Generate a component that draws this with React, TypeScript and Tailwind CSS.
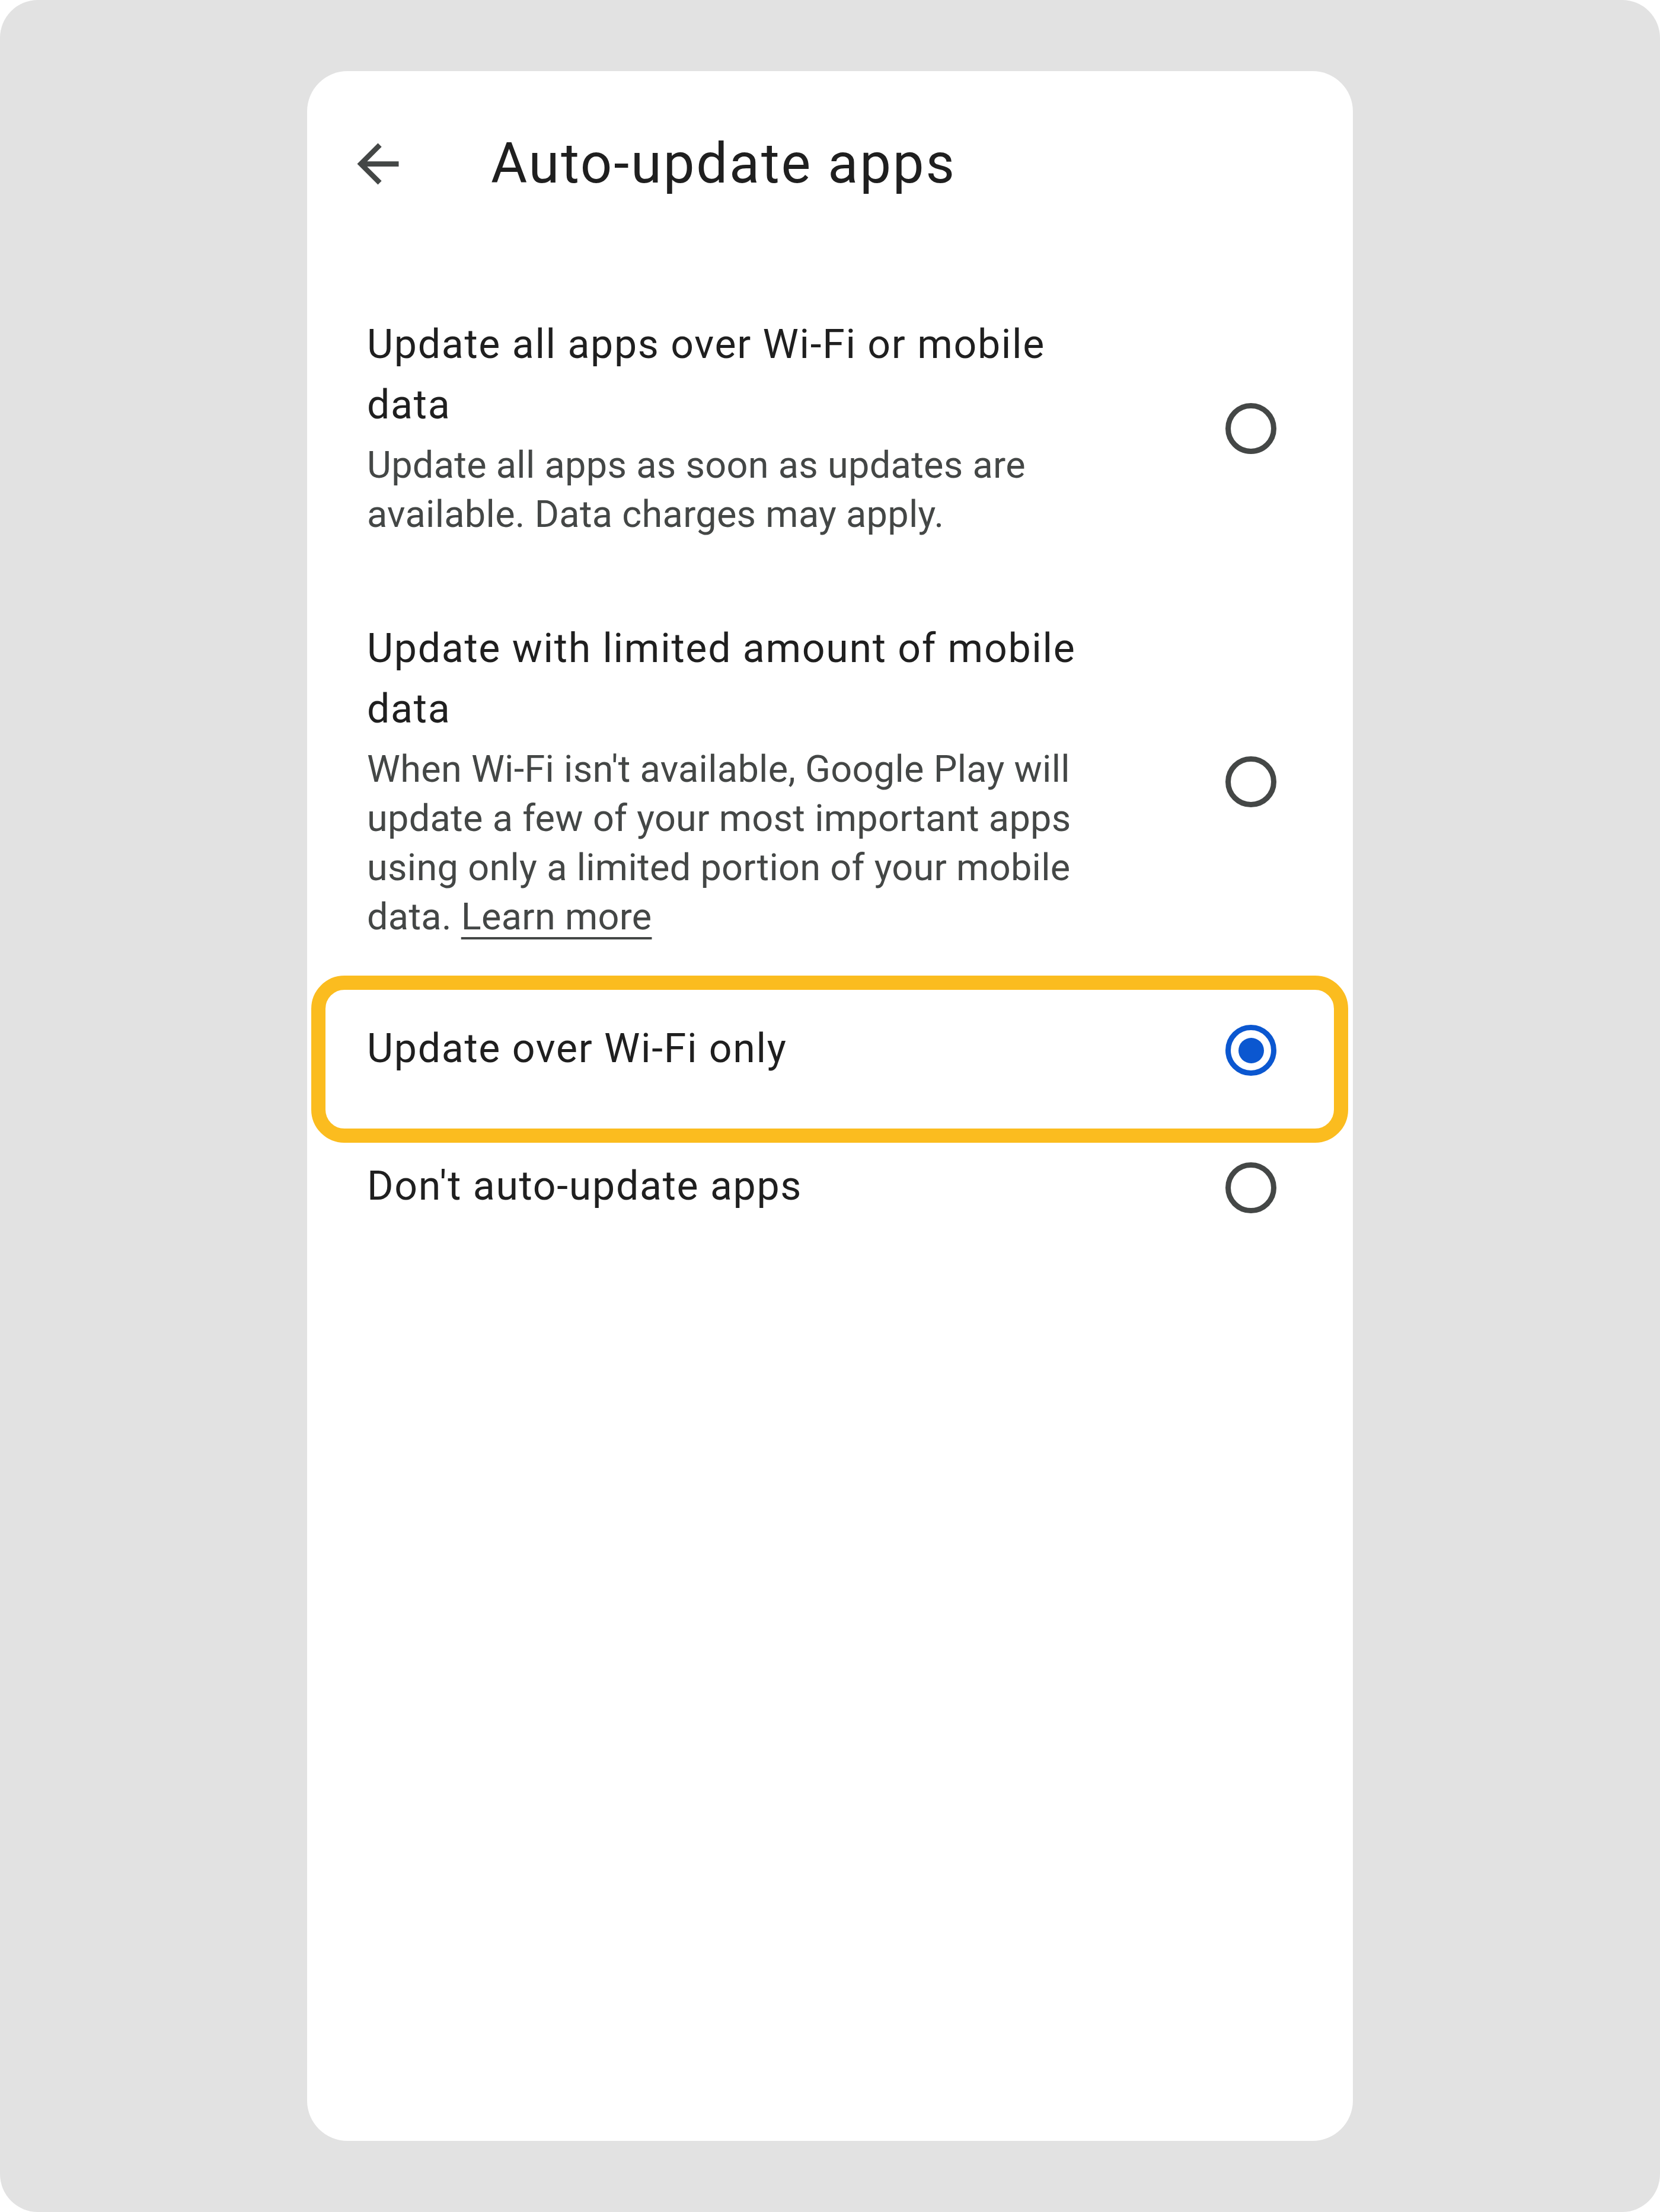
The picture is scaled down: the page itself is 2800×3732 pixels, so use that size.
import React from "react";

type Option = {
  title: string;
  desc?: React.ReactNode;
  selected?: boolean;
  highlight?: boolean;
};

const options: Option[] = [
  {
    title: "Update all apps over Wi-Fi or mobile data",
    desc: "Update all apps as soon as updates are available. Data charges may apply.",
  },
  {
    title: "Update with limited amount of mobile data",
    desc: (
      <>
        When Wi-Fi isn't available, Google Play will update a few of your most important apps using only a
        limited portion of your mobile data.{" "}
        <span className="underline decoration-[4px] underline-offset-[13px]">Learn more</span>
      </>
    ),
  },
  { title: "Update over Wi-Fi only", selected: true, highlight: true },
  { title: "Don't auto-update apps" },
];

function BackArrow() {
  return (
    <svg viewBox="0 0 24 24" className="w-[105px] h-[105px] shrink-0" fill="#444746">
      <path d="M20 11H7.83l5.59-5.59L12 4l-8 8 8 8 1.41-1.41L7.83 13H20v-2z" />
    </svg>
  );
}

function Radio({ selected }: { selected?: boolean }) {
  if (selected) {
    return (
      <div className="w-[86px] h-[86px] shrink-0 mt-[6px] rounded-full border-[9px] border-[#0b57d0] flex items-center justify-center">
        <div className="w-[43px] h-[43px] rounded-full bg-[#0b57d0]" />
      </div>
    );
  }
  return <div className="w-[86px] h-[86px] shrink-0 mt-[6px] rounded-full border-[9px] border-[#444746]" />;
}

function OptionRow({ opt, index }: { opt: Option; index: number }) {
  const pad = index === 2 ? "pt-[63px] pb-[63px]" : "py-[67px]";
  return (
    <div className={`relative flex items-center pl-[101px] pr-[129px] ${pad}`}>
      {opt.highlight && (
        <div className="absolute -top-[9px] -bottom-[45px] left-[7px] right-[8px] rounded-[56px] border-[24px] border-[#fbbc1f] pointer-events-none" />
      )}
      <div className="flex-1 min-w-0 mr-[194px]">
        <div className="text-[68px] leading-[102px] tracking-[1.7px] text-[#1f1f1f]">{opt.title}</div>
        {opt.desc && (
          <div className="mt-[9px] text-[63px] leading-[83px] tracking-[0.3px] text-[#444746]">{opt.desc}</div>
        )}
      </div>
      <Radio selected={opt.selected} />
    </div>
  );
}

export default function App() {
  return (
    <div className="w-[2800px] h-[3732px] bg-white font-['Roboto',sans-serif]">
      <div className="w-full h-full bg-[#e2e2e2] rounded-[64px] flex justify-center pt-[120px]">
        <div className="w-[1764px] h-[3492px] bg-white rounded-[68px] pt-[100px]">
          <div className="flex items-center h-[112px] pl-[67px]">
            <BackArrow />
            <h1 className="ml-[138px] text-[94px] leading-[112px] tracking-[2.8px] text-[#1f1f1f]">
              Auto-update apps
            </h1>
          </div>
          <div className="mt-[131px]">
            {options.map((opt, i) => (
              <OptionRow key={i} opt={opt} index={i} />
            ))}
          </div>
        </div>
      </div>
    </div>
  );
}
